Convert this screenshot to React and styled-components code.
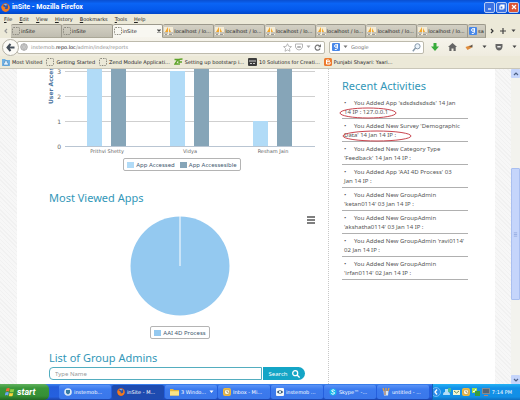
import React from "react";
import styled, { createGlobalStyle, css } from "styled-components";

const ui = `"DejaVu Sans", Tahoma, sans-serif`;
const bold = `Roboto, "Liberation Sans", sans-serif`;
const web = `"Noto Sans", Verdana, sans-serif`;

const GlobalStyle = createGlobalStyle`
  *, *::before, *::after { box-sizing: border-box; }
  html, body { margin: 0; height: 100%; }
  #root { height: 100%; }
  button, input { font: inherit; color: inherit; border: 0; padding: 0; margin: 0; background: none; min-width: 0; }
  input:focus { outline: none; }
  ul { list-style: none; margin: 0; padding: 0; }
  h1, h2 { margin: 0; font-weight: 400; }
  svg { display: block; flex: none; }
`;

const Window = styled.div`
  display: flex;
  flex-direction: column;
  height: 100vh;
  overflow: hidden;
  background: #ece9d8;
  color: #222;
  font: 5px/8px ${ui};
`;

/* Browser frame */
const TitleBar = styled.header`
  display: flex;
  align-items: center;
  gap: 2px;
  flex: none;
  height: 14px;
  padding: 0 1px 0 1px;
  color: #fff;
  font: 700 7px/8px ${bold};
  background: linear-gradient(#0a4fd0, #0a64f5 25%, #0459ec 70%, #0046c8);
`;
const WindowTitle = styled.span`
  flex: 1;
`;
const WindowButtons = styled.div`
  display: flex;
  gap: 1px;
`;
const WindowButton = styled.button`
  display: grid;
  place-items: center;
  width: 11px;
  height: 11px;
  border: 1px solid #b9cdf5;
  border-radius: 2px;
  background: ${(p) => (p.$close ? "#db5436" : "#3a72e4")};
`;
const MenuBar = styled.nav`
  display: flex;
  align-items: center;
  gap: 7px;
  flex: none;
  height: 10px;
  padding-left: 4px;
`;
const MenuItem = styled.button`
  &::first-letter { text-decoration: underline; }
`;
const TabStrip = styled.div`
  display: flex;
  align-items: stretch;
  flex: none;
  height: 14px;
  padding-right: 1px;
`;
const StripButton = styled.button`
  display: grid;
  place-items: center;
  flex: none;
  width: 11px;
`;
const Tab = styled.button`
  display: flex;
  align-items: center;
  gap: 1px;
  flex: ${(p) => (p.$short ? "0 0 18px" : "1 1 0")};
  padding: 0 0 0 1px;
  white-space: nowrap;
  text-align: left;
  border: 1px solid #9c998c;
  border-bottom-color: ${(p) => (p.$active ? "#f6f4ec" : "#aaa797")};
  border-left-width: 0;
  border-radius: 2px 2px 0 0;
  background: ${(p) => (p.$active ? "#f8f7f1" : "linear-gradient(#d3d0c4, #c0bdb0)")};
`;
const TabLabel = styled.span`
  flex: 1;
`;
const NavBar = styled.div`
  display: flex;
  align-items: center;
  flex: none;
  height: 18px;
  padding: 0 2px;
  background: linear-gradient(#f6f4ec, #efecdf);
`;
const BackButton = styled.button`
  display: grid;
  place-items: center;
  flex: none;
  width: 17px;
  height: 17px;
  z-index: 1;
  border: 1px solid #b5b2a6;
  border-radius: 50%;
  background: #fbfaf6;
`;
const Field = styled.div`
  position: relative;
  display: flex;
  align-items: center;
  gap: 3px;
  height: 13px;
  min-width: 0;
  border: 1px solid #bdbaac;
  border-radius: 2px;
  background: #fff;
  color: #8d8d8d;
`;
const AddressField = styled(Field)`
  flex: 1;
  margin: 0 4px 0 -2px;
  padding: 0 3px 0 2px;
`;
const SearchField = styled(Field)`
  flex: 0 0 95px;
  padding: 0 2px;
`;
const Address = styled.span`
  flex: 1;
  white-space: nowrap;
`;
const Domain = styled.span`
  color: #111;
`;
const AddressInput = styled.input`
  position: absolute;
  inset: 0 44px 0 18px;
`;
const EngineInput = styled.input`
  flex: 1;
  &::placeholder { color: #777; opacity: 1; }
`;
const NavTools = styled.div`
  display: flex;
  align-items: center;
  justify-content: space-between;
  flex: 0 0 94px;
  padding: 0 1px 0 7px;
`;
const ToolButton = styled.button`
  display: grid;
  place-items: center;
`;
const BookmarkBar = styled.nav`
  display: flex;
  align-items: center;
  gap: 4px;
  flex: none;
  height: 13px;
  padding-left: 2px;
  border-bottom: 1px solid #c9c6b8;
`;
const Bookmark = styled.a`
  display: flex;
  align-items: center;
  gap: 2px;
  color: #222;
  text-decoration: none;
  white-space: nowrap;
`;

/* Web page */
const Viewport = styled.div`
  display: grid;
  grid-template-columns: 17px minmax(0, 312fr) minmax(0, 166fr) 16px 9px;
  flex: 1;
  min-height: 0;
  overflow: hidden;
  background: #fff;
  font: 6px/8px ${web};
`;
const Gutter = styled.div`
  background: repeating-linear-gradient(45deg, #f1f1f1 0 1px, #f7f7f7 1px 3px);
`;
const Reports = styled.main`
  padding: 0 13px 0 32px;
  border-right: 1px dotted #c8c8c8;
`;
const Sidebar = styled.aside`
  padding: 10px 27px 0 13px;
`;
const Chart = styled.svg`
  width: 100%;
  height: auto;
  overflow: visible;
  font-family: "DejaVu Sans", sans-serif;
`;
const Legend = styled.div`
  display: flex;
  align-items: center;
  gap: 5px;
  width: max-content;
  height: 13px;
  margin: ${(p) => (p.$pie ? "10px auto 0" : "1px auto 0")};
  padding: 0 3px;
  border: 1px solid #b4b4b4;
  border-radius: 2px;
  color: #3e576f;
`;
const LegendItem = styled.button`
  display: flex;
  align-items: center;
  gap: 2px;
`;
const Swatch = styled.span`
  width: 7px;
  height: 6px;
  background: ${(p) => p.$color};
`;
const Heading = styled.h2`
  color: #3397b8;
  font-size: 11px;
  line-height: 14px;
  white-space: nowrap;
`;
const Section = styled.section`
  padding-top: ${(p) => p.$space};
`;
const PieRow = styled.div`
  display: grid;
  grid-template-columns: 1fr auto 1fr;
  align-items: start;
  padding-top: 11px;
`;
const ChartMenu = styled.button`
  grid-column: 3;
  justify-self: end;
`;
const Pie = styled.svg`
  grid-column: 2;
  grid-row: 1;
`;
const PieBlock = styled.div`
  padding-right: 4px;
`;
const AdminSearch = styled.form`
  display: flex;
  gap: 1px;
  height: 13px;
  margin: 2px 10px 0 0;
`;
const NameInput = styled.input`
  flex: 1;
  padding-left: 5px;
  border: 1px solid #53adbf;
  border-radius: 4px 0 0 4px;
  &::placeholder { color: #999; opacity: 1; }
`;
const SearchButton = styled.button`
  display: flex;
  align-items: center;
  justify-content: center;
  gap: 4px;
  width: 42px;
  border-radius: 0 7px 7px 0;
  background: #14a5c6;
  color: #fff;
`;
const Activities = styled.ul`
  padding-top: 3px;
`;
const Activity = styled.li`
  position: relative;
  padding: 3px 0 1px 2px;
  border-bottom: 1px solid #b0b0b0;
  color: #555;
  line-height: 9px;
  white-space: pre-line;
  &::before {
    content: "•";
    display: inline-block;
    width: 10px;
  }
`;
const Circled = styled.svg`
  position: absolute;
  left: ${(p) => p.$left};
  top: 11px;
`;
const ScrollBar = styled.div`
  display: flex;
  flex-direction: column;
  background: #f3f3ee;
`;
const ScrollButton = styled.button`
  display: grid;
  place-items: center;
  height: 9px;
  border-radius: 1px;
  background: #c5d5fb;
`;
const ScrollTrack = styled.div`
  flex: 1;
  padding-top: 90px;
`;
const ScrollThumb = styled.div`
  display: grid;
  place-items: center;
  height: 132px;
  border: 1px solid #a9bff0;
  border-radius: 1px;
  background: #c5d5fb;
`;

/* Taskbar */
const TaskBar = styled.footer`
  display: flex;
  flex: none;
  height: 16px;
  color: #fff;
  background: linear-gradient(#3c83ee, #245edb 18%, #2560df 80%, #1b43a8);
`;
const StartButton = styled.button`
  display: flex;
  align-items: center;
  gap: 2px;
  flex: 0 0 49px;
  padding-left: 5px;
  border-radius: 0 5px 5px 0;
  font: italic 700 9px/12px ${bold};
  background: linear-gradient(#62b25f, #3a973a 25%, #368f36 75%, #226722);
`;
const Tasks = styled.div`
  display: flex;
  gap: 1px;
  flex: 1;
  min-width: 0;
  padding: 1px 3px 1px 10px;
`;
const Task = styled.button`
  display: flex;
  align-items: center;
  gap: 2px;
  flex: 1 1 0;
  padding: 0 3px 0 5px;
  border-radius: 2px;
  white-space: nowrap;
  text-align: left;
  ${(p) =>
    p.$active
      ? css`background: #1e4bb0;`
      : css`background: linear-gradient(#5a93f7, #3c7bee 30%, #3a77ea);`}
`;
const Tray = styled.div`
  display: flex;
  align-items: center;
  gap: 2px;
  flex: 0 0 88px;
  padding: 0 8px 0 0;
  border-left: 1px solid #1460b8;
  background: linear-gradient(#25b3f5, #1290e8 25%, #128fe6 80%, #0e6ec0);
`;
const Clock = styled.time`
  margin-left: auto;
  white-space: nowrap;
`;

const BlankPage = () => (
  <svg width="8" height="8" viewBox="0 0 8 8">
    <rect x=".5" y=".5" width="7" height="7" rx="1" fill="none" stroke="#8b897f" strokeDasharray="1.5 1" />
  </svg>
);
const Sail = () => (
  <svg width="9" height="8" viewBox="0 0 9 8">
    <path d="M0 0h9v8H0z" fill="#f4ecd6" />
    <path d="M4 0v5H1zM5 1v4h2z" fill="#f2a62c" />
    <path d="M0 6h4M5 6h4M1 7.5h2M5 7.5h3" stroke="#999" />
  </svg>
);
const GoogleG = () => (
  <svg width="8" height="8" viewBox="0 0 8 8">
    <rect width="8" height="8" rx="1" fill="#4787e8" />
    <circle cx="4" cy="3" r="1.4" fill="none" stroke="#fff" />
    <path d="M5.4 1v4.3q0 1.5-2.6 1.2" fill="none" stroke="#fff" />
  </svg>
);
const Firefox = ({ size = 9 }) => (
  <svg width={size} height={size} viewBox="0 0 10 10">
    <circle cx="5" cy="5" r="4.6" fill="#e5671d" />
    <circle cx="5.4" cy="4.2" r="3" fill="#2c55a8" />
    <path d="M.5 3q1 1 2.6.8l2 1.6-1 .8q1.5 1.4 3.6-.2.8-2-.7-4.5Q10 3 9.4 6.4 8.2 9.8 5 9.6.5 9 .5 3z" fill="#f07c22" />
    <path d="M3 1.5q2-1 4 .5L5.5 3z" fill="#8ac4ee" />
  </svg>
);
const Down = ({ color = "#444" }) => (
  <svg width="5" height="4" viewBox="0 0 5 4"><path d="M.5.5h4L2.5 3z" fill={color} /></svg>
);
const Chevron = ({ d, color = "#4d6185", size = 6 }) => (
  <svg width={size} height={size} viewBox="0 0 6 6" fill="none" stroke={color} strokeWidth="1.2"><path d={d} /></svg>
);
const Lens = ({ color, size = 8 }) => (
  <svg width={size} height={size} viewBox="0 0 8 8" fill="none" stroke={color} strokeWidth="1.3">
    <circle cx="3.2" cy="3.2" r="2.5" /><path d="M5 5l2.6 2.6" />
  </svg>
);
const SearchLens = () => (
  <svg width="9" height="9" viewBox="0 0 9 9" fill="none">
    <circle cx="5.5" cy="3.3" r="2.6" fill="#e9f2fa" stroke="#8799aa" /><path d="M3.5 5L.8 8.2" stroke="#8799aa" strokeWidth="1.5" />
  </svg>
);
const PeopleIcon = () => (
  <svg width="8" height="8" viewBox="0 0 8 8">
    <path d="M0 1h3l1 1h4v6H0z" fill="#70b1e4" /><path d="M1.5 7q0-2 1.3-2.5a1.3 1.3 0 1 1 2.4 0Q6.5 5 6.5 7z" fill="#e7f4ff" stroke="#3474a8" strokeWidth=".5" />
  </svg>
);
const ZfIcon = () => (
  <svg width="9" height="8" viewBox="0 0 9 8" fill="none" stroke="#5da329" strokeWidth="1.4"><path d="M.5 1.5H4L1 6h3M5 7V2q0-1 3.5-1M5 4h3" /></svg>
);
const FilmIcon = () => (
  <svg width="9" height="8" viewBox="0 0 9 8"><rect width="9" height="8" rx="1" fill="#3c3c3c" /><path d="M1 3h7M2 5.5h2M5 5.5h2" stroke="#ccc" /></svg>
);
const BloggerIcon = () => (
  <svg width="8" height="8" viewBox="0 0 8 8"><rect width="8" height="8" rx="1.5" fill="#ed7a2e" /><path d="M2.5 2h2q1 0 1 1.5 1 .2.5 2.5H2.5zM3 3.7h2.5" fill="none" stroke="#fff" /></svg>
);
const WindowsFlag = () => (
  <svg width="10" height="10" viewBox="0 0 10 10">
    <path d="M1.5 1.5q2-1 3.3 0L4 4.6q-1.5-1-3.3 0z" fill="#f06a35" /><path d="M5.5 1.7q2 1 3.8 0L8.5 4.9q-2 .8-3.7 0z" fill="#8fd044" />
    <path d="M.5 5.4q2-.9 3.3 0L3 8.6q-1.6-1-3.3 0z" fill="#6aa5f5" /><path d="M4.6 5.7q2 1 3.7 0L7.5 8.9q-2 .9-3.7 0z" fill="#fbd43a" />
  </svg>
);
const Shield = () => (
  <svg width="8" height="8" viewBox="0 0 8 8"><circle cx="4" cy="4" r="3.8" fill="#dce9f6" /><path d="M2 2h4v2.5Q5.5 6 4 6.5 2.5 6 2 4.5z" fill="#377ca5" /></svg>
);
const FolderIcon = () => (
  <svg width="9" height="8" viewBox="0 0 9 8"><path d="M0 1h3l1 1h5v5.5H0z" fill="#e7b93b" /><path d="M0 3.2h9v4.3H0z" fill="#fbe488" /></svg>
);
const ClockIcon = () => (
  <svg width="8" height="8" viewBox="0 0 8 8"><rect width="8" height="8" rx="2" fill="#efb93b" /><circle cx="4" cy="4" r="2.7" fill="#fff7d8" stroke="#a4761d" strokeWidth=".5" /><path d="M4 2.5V4l1.5.7" fill="none" stroke="#765" strokeWidth=".7" /></svg>
);
const EyeIcon = () => (
  <svg width="8" height="8" viewBox="0 0 8 8"><rect width="8" height="8" rx="1" fill="#f6f8fa" /><path d="M.7 4Q4 .5 7.3 4 4 7.5.7 4z" fill="#34516a" /><circle cx="4" cy="4" r="1.2" fill="#d6edf9" /></svg>
);
const SkypeIcon = () => (
  <svg width="8" height="8" viewBox="0 0 8 8"><circle cx="4" cy="4" r="3.5" fill="#19b8ed" /><path d="M5.7 2.5Q4 1 2.7 2.5q-.2 1 1.6 1.5T5.4 5.5Q4 7 2.3 5.5" fill="none" stroke="#fff" /></svg>
);
const PaintIcon = () => (
  <svg width="8" height="8" viewBox="0 0 8 8"><path d="M1.5 3h5L6 7.5H2z" fill="#d8e5ef" /><path d="M2 3L1 0M4 3V0M6 3l1-3" stroke="#e7a13f" strokeWidth="1.3" /><path d="M3 3v4" stroke="#945b42" /></svg>
);

const menus = ["File", "Edit", "View", "History", "Bookmarks", "Tools", "Help"];
const tabs = [
  ...["inSite", "inSite"].map((label) => ({ label, Icon: BlankPage })),
  { label: "inSite", Icon: BlankPage, active: true },
  ...Array.from({ length: 6 }, () => ({ label: "localhost / lo...", Icon: Sail })),
  { label: "sa", Icon: GoogleG, short: true },
];
const bookmarks = [
  ["Most Visited", PeopleIcon],
  ["Getting Started", BlankPage],
  ["Zend Module Applicati...", BlankPage],
  ["Setting up bootstarp i...", ZfIcon],
  ["10 Solutions for Creati...", FilmIcon],
  ["Punjabi Shayari: Yaari...", BloggerIcon],
];
const access = [
  { name: "Prithvi Shetty", accessed: 4, accessible: 4 },
  { name: "Vidya", accessed: 3, accessible: 4 },
  { name: "Resham Jain", accessed: 1, accessible: 4 },
];
const activities = [
  { text: "You Added App 'sdsdsdsdsds' 14 Jan\n14 IP : 127.0.0.1", mark: { left: "-3px", rx: 29 } },
  { text: "You Added New Survey 'Demographic\nData' 14 Jan 14 IP :", mark: { left: "0px", rx: 35 } },
  { text: "You Added New Category Type\n'Feedback' 14 Jan 14 IP :" },
  { text: "You Added App 'AAI 4D Process' 03\nJan 14 IP :" },
  { text: "You Added New GroupAdmin\n'ketan0114' 03 Jan 14 IP :" },
  { text: "You Added New GroupAdmin\n'akshatha0114' 03 Jan 14 IP :" },
  { text: "You Added New GroupAdmin 'ravi0114'\n02 Jan 14 IP :" },
  { text: "You Added New GroupAdmin\n'irfan0114' 02 Jan 14 IP :" },
];
const tasks = [
  { label: "instemob...", icon: <Shield /> },
  { label: "inSite - M...", icon: <Firefox size={8} />, active: true },
  { label: "3 Windo...", icon: <FolderIcon />, group: true },
  { label: "Inbox - Mi...", icon: <ClockIcon /> },
  { label: "instemob ...", icon: <EyeIcon /> },
  { label: "Skype™ -...", icon: <SkypeIcon /> },
  { label: "untitled - ...", icon: <PaintIcon /> },
];

function AccessChart() {
  const y = (v) => 77 - v * 25;
  return (
    <Chart viewBox="0 0 266 88" role="img" aria-label="User access by person">
      <defs><clipPath id="plot"><rect x="-10" width="290" height="88" /></clipPath></defs>
      <g clipPath="url(#plot)">
        {[0, 1, 2, 3].map((v) => (
          <g key={v}>
            <path d={`M16 ${y(v) + 0.5}H266`} stroke={v ? "#cfcfcf" : "#b9c5d2"} />
            <text x="12" y={y(v) + 3} fontSize="6" textAnchor="end" fill="#666">{v}</text>
          </g>
        ))}
        {access.map(({ name, accessed, accessible }, i) => (
          <g key={name}>
            <rect x={38 + i * 83} y={y(accessed)} width="15" height={accessed * 25} fill="#b1dbf7" />
            <rect x={62 + i * 83} y={y(accessible)} width="15" height={accessible * 25} fill="#86a5b8" />
            <text x={58 + i * 83} y="84" fontSize="5" textAnchor="middle" fill="#666">{name}</text>
          </g>
        ))}
        <text transform="translate(4 35) rotate(-90)" fontSize="6" fontWeight="700" fill="#4d759e">User Acces</text>
      </g>
    </Chart>
  );
}

export default function App() {
  return (
    <Window>
      <GlobalStyle />
      <TitleBar>
        <Firefox />
        <WindowTitle>inSite - Mozilla Firefox</WindowTitle>
        <WindowButtons>
          <WindowButton aria-label="Minimize"><Chevron d="M1 5h3" color="#fff" /></WindowButton>
          <WindowButton aria-label="Restore"><Chevron d="M2 2V1h3v3H4M1 2h3v3H1z" color="#fff" /></WindowButton>
          <WindowButton $close aria-label="Close"><Chevron d="M1 1l4 4M5 1L1 5" color="#fff" /></WindowButton>
        </WindowButtons>
      </TitleBar>
      <MenuBar>{menus.map((m) => <MenuItem key={m}>{m}</MenuItem>)}</MenuBar>
      <TabStrip role="tablist">
        <StripButton aria-label="Scroll tabs left"><Chevron d="M4 1L2 3l2 2" color="#999" /></StripButton>
        {tabs.map(({ label, Icon, active, short }, i) => (
          <Tab key={i} role="tab" aria-selected={!!active} $active={active} $short={short}>
            <Icon /><TabLabel>{label}</TabLabel>
            {active && <Chevron d="M1.5 1.5l3 3M4.5 1.5l-3 3" color="#444" />}
          </Tab>
        ))}
        <StripButton aria-label="Scroll tabs right"><Chevron d="M2 1l2 2-2 2" color="#333" /></StripButton>
        <StripButton aria-label="New tab"><Chevron d="M0 3h6M3 0v6" color="#444" /></StripButton>
        <StripButton aria-label="List tabs"><Down /></StripButton>
      </TabStrip>
      <NavBar>
        <BackButton aria-label="Back">
          <svg width="9" height="9" viewBox="0 0 9 9" fill="none" stroke="#444e5a" strokeWidth="2"><path d="M4.5 1L1.5 4.5l3 3.5M1.5 4.5H8.5" /></svg>
        </BackButton>
        <AddressField>
          <svg width="8" height="8" viewBox="0 0 8 8" fill="none" stroke="#aaa"><circle cx="4" cy="4" r="3.3" fill="#ddd" /><path d="M1 3h6M1 5h6M4 .7q-3 3.3 0 6.6M4 .7q3 3.3 0 6.6" strokeWidth=".6" /></svg>
          <Address>instemob.<Domain>repo.loc</Domain>/admin/index/reports</Address>
          <AddressInput aria-label="Address" />
          <ToolButton aria-label="Bookmark this page">
            <svg width="9" height="9" viewBox="0 0 9 9"><path d="M4.5.7l1.2 2.6 2.8.3-2.1 1.9.6 2.8-2.5-1.4L2 8.3l.6-2.8L.5 3.6l2.8-.3z" fill="#fff" stroke="#aaa" strokeWidth=".8" /></svg>
          </ToolButton>
          <svg width="8" height="8" viewBox="0 0 8 8" fill="none" stroke="#b5b5b5"><path d="M.5 1h7v3q-1 3-3.5 3T.5 4zM2.5 3.5h3v1h-3z" /></svg>
          <Down color="#aaa" />
          <ToolButton aria-label="Reload">
            <svg width="7" height="7" viewBox="0 0 7 7"><path d="M5.5 2A2.5 2.5 0 1 0 6 4.5" fill="none" stroke="#777" strokeWidth="1.2" /><path d="M4 3.2h3V0z" fill="#777" /></svg>
          </ToolButton>
        </AddressField>
        <SearchField>
          <GoogleG /><Down color="#777" />
          <EngineInput aria-label="Search with Google" placeholder="Google" />
          <ToolButton aria-label="Search the web"><SearchLens /></ToolButton>
        </SearchField>
        <NavTools>
          <ToolButton aria-label="Downloads"><svg width="8" height="8" viewBox="0 0 8 8"><path d="M2.5 0h3v3.5H8L4 8 0 3.5h2.5z" fill="#38ac3b" /></svg></ToolButton>
          <ToolButton aria-label="Home"><svg width="9" height="8" viewBox="0 0 9 8"><path d="M4.5 0L9 4H7.7v4H5.5V5.5h-2V8H1.3V4H0z" fill="#656565" /></svg></ToolButton>
          <ToolButton aria-label="Add-on"><svg width="8" height="7" viewBox="0 0 8 7"><path d="M.5 3L5 1.5l2 2L2.5 6z" fill="#df8c3d" /><path d="M4 2.5L7.5.5v3z" fill="#625447" /></svg></ToolButton>
          <ToolButton aria-label="Add-on options"><Down /></ToolButton>
          <ToolButton aria-label="Pocket"><svg width="8" height="8" viewBox="0 0 8 8"><path d="M.5 1h7v3q-1 3.5-3.5 3.5T.5 4z" fill="#666" /><path d="M2.3 3h3.4v1.5H2.3z" fill="#eee" /></svg></ToolButton>
          <ToolButton aria-label="More tools"><Down /></ToolButton>
        </NavTools>
      </NavBar>
      <BookmarkBar>
        {bookmarks.map(([label, Icon]) => <Bookmark href="#" key={label}><Icon />{label}</Bookmark>)}
      </BookmarkBar>

      <Viewport>
        <Gutter />
        <Reports>
          <AccessChart />
          <Legend>
            <LegendItem><Swatch $color="#b1dbf7" />App Accessed</LegendItem>
            <LegendItem><Swatch $color="#86a5b8" />App Accessesible</LegendItem>
          </Legend>
          <Section $space="20px">
            <Heading>Most Viewed Apps</Heading>
            <PieRow>
              <ChartMenu aria-label="Chart menu">
                <svg width="8" height="8" viewBox="0 0 8 8" stroke="#555" strokeWidth="1.5"><path d="M0 1h8M0 4h8M0 7h8" /></svg>
              </ChartMenu>
              <Pie as="div">
                <PieBlock>
                  <svg width="100" height="100" viewBox="0 0 100 100" role="img" aria-label="AAI 4D Process">
                    <circle cx="50" cy="50" r="49.5" fill="#94c9f0" /><path d="M50 0v50" stroke="#fff" />
                  </svg>
                </PieBlock>
              </Pie>
            </PieRow>
            <PieBlock>
              <Legend $pie><LegendItem><Swatch $color="#94c9f0" />AAI 4D Process</LegendItem></Legend>
            </PieBlock>
          </Section>
          <Section $space="12px">
            <Heading>List of Group Admins</Heading>
            <AdminSearch>
              <NameInput aria-label="Group admin name" placeholder="Type Name" />
              <SearchButton type="button">Search <Lens color="#fff" /></SearchButton>
            </AdminSearch>
          </Section>
        </Reports>
        <Sidebar>
          <Heading>Recent Activities</Heading>
          <Activities>
            {activities.map(({ text, mark }) => (
              <Activity key={text}>
                {text}
                {mark && (
                  <Circled $left={mark.left} width={mark.rx * 2} height="12" aria-hidden="true">
                    <ellipse cx={mark.rx} cy="6" rx={mark.rx - 1} ry="5" fill="none" stroke="#c9454f" />
                  </Circled>
                )}
              </Activity>
            ))}
          </Activities>
        </Sidebar>
        <Gutter />
        <ScrollBar>
          <ScrollButton aria-label="Scroll up"><Chevron d="M1 4l2-2 2 2" /></ScrollButton>
          <ScrollTrack><ScrollThumb><Chevron d="M1 1h4M1 3h4M1 5h4" color="#9bb1e4" size={5} /></ScrollThumb></ScrollTrack>
          <ScrollButton aria-label="Scroll down"><Chevron d="M1 2l2 2 2-2" /></ScrollButton>
        </ScrollBar>
      </Viewport>

      <TaskBar>
        <StartButton><WindowsFlag />start</StartButton>
        <Tasks>
          {tasks.map(({ label, icon, active, group }) => (
            <Task key={label} $active={active}>{icon}<TabLabel>{label}</TabLabel>{group && <Down color="#fff" />}</Task>
          ))}
        </Tasks>
        <Tray>
          <svg width="8" height="10" viewBox="0 0 8 10"><circle cx="3" cy="5" r="4.5" fill="#2c8ee9" stroke="#bde3ff" strokeWidth=".5" /><path d="M4 2.5L2 5l2 2.5" fill="none" stroke="#fff" strokeWidth="1.3" /></svg>
          <svg width="8" height="8" viewBox="0 0 8 8"><path d="M0 7q0-3 2-3V1h3v3q2 0 2 3z" fill="#b3def7" /><path d="M5 0h3v4H5z" fill="#48ba95" /></svg>
          <svg width="7" height="7" viewBox="0 0 7 7"><path d="M0 1h7v5H0z" fill="#f4f6d2" /><path d="M1 2l2.5 2L6 2" fill="none" stroke="#698b59" /></svg>
          <ClockIcon />
          <svg width="8" height="8" viewBox="0 0 8 8"><path d="M0 0h5v5H0z" fill="#a5dc48" /><path d="M3 3h5v5H3z" fill="#3a9c3d" /><path d="M1 3l1 1 2-3" fill="none" stroke="#fff" /></svg>
          <svg width="8" height="8" viewBox="0 0 8 8"><rect width="8" height="6" fill="#848a91" /><path d="M1 1h6v4H1z" fill="#536678" /><path d="M2 7.5h4" stroke="#bb806c" /></svg>
          <Clock>7:14 PM</Clock>
        </Tray>
      </TaskBar>
    </Window>
  );
}
